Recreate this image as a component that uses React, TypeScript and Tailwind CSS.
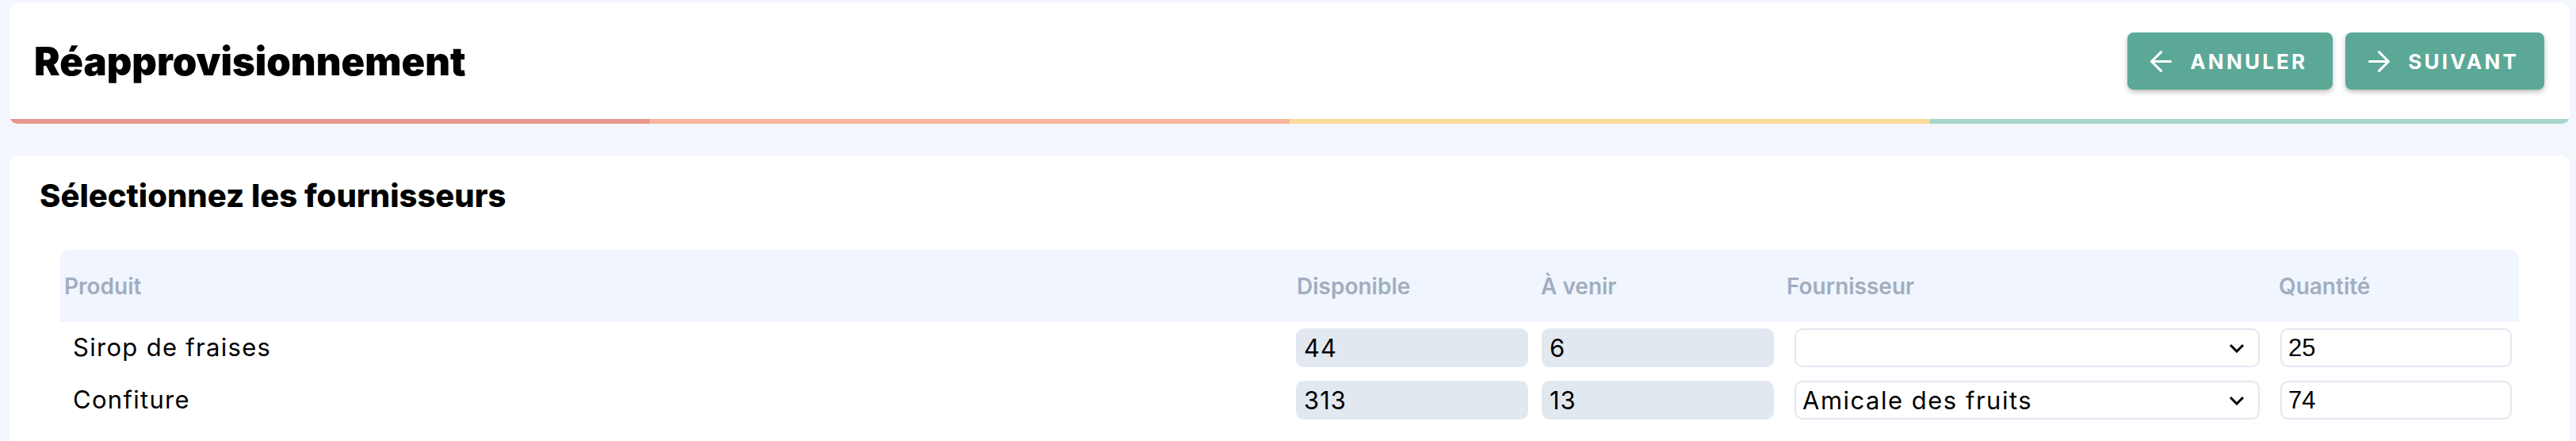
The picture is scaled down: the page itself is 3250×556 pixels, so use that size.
import { ArrowLeft, ArrowRight } from 'lucide-react';
import type { ReactNode } from 'react';

/**
 * Réapprovisionnement - étape de sélection des fournisseurs
 */

interface Ligne {
  produit: string;
  disponible: number;
  aVenir: number;
  fournisseur: string;
  quantite: number;
}

const lignes: Ligne[] = [
  { produit: 'Sirop de fraises', disponible: 44, aVenir: 6, fournisseur: '', quantite: 25 },
  { produit: 'Confiture', disponible: 313, aVenir: 13, fournisseur: 'Amicale des fruits', quantite: 74 },
];

const fournisseurs = ['Amicale des fruits', 'Vergers du Sud', 'Coopérative Bio'];

// couleurs de la barre d'étapes
const etapes = ['bg-[#e8978c]', 'bg-[#f7b69d]', 'bg-[#fbdc97]', 'bg-[#a8d5c9]'];

const colonnes = 'grid grid-cols-[1559px_309px_310px_621px_303px]';

const BoutonAction = ({ icon, label }: { icon: ReactNode; label: string }) => (
  <button className="flex items-center gap-[16px] h-[72px] pl-[22px] pr-[32px] rounded-[8px] bg-[#5ba897] text-white shadow-[0_3px_6px_rgba(0,0,0,0.25)]">
    {icon}
    <span className="text-[26px] font-bold uppercase tracking-[3.2px]">{label}</span>
  </button>
);

const App = () => {
  return (
    <div className="min-h-screen bg-[#f3f6fd] pl-[12px] pr-[8px] pt-[4px] font-['Inter',sans-serif] text-black">
      {/* Header */}
      <header className="bg-white rounded-[10px] overflow-hidden">
        <div className="flex items-center justify-between pl-[31px] pr-[32px] py-[37px]">
          <h1 className="text-[49px] leading-none font-black">Réapprovisionnement</h1>
          <div className="flex gap-[16px]">
            <BoutonAction icon={<ArrowLeft size={41} strokeWidth={1.8} />} label="Annuler" />
            <BoutonAction icon={<ArrowRight size={41} strokeWidth={1.8} />} label="Suivant" />
          </div>
        </div>
        <div className="grid grid-cols-4 h-[6px]">
          {etapes.map((c) => (
            <div key={c} className={c} />
          ))}
        </div>
      </header>

      {/* Fournisseurs */}
      <section className="mt-[40px] bg-white rounded-[10px] pt-[27px] pb-[60px]">
        <h2 className="pl-[38px] text-[40px] leading-[48px] font-extrabold">Sélectionnez les fournisseurs</h2>

        <div className="mx-[64px] mt-[44px]">
          {/* En-tête du tableau */}
          <div className={`${colonnes} h-[91px] items-center bg-[#f1f5fd] rounded-t-[10px] text-[28px] font-semibold text-[#a0aec0]`}>
            <div className="pl-[5px]">Produit</div>
            <div className="pl-[1px]">Disponible</div>
            <div>À venir</div>
            <div>Fournisseur</div>
            <div>Quantité</div>
          </div>

          {/* Lignes */}
          <div className="flex flex-col gap-[17px] pt-[8px]">
            {lignes.map((l) => (
              <div key={l.produit} className={`${colonnes} items-center text-[31px]`}>
                <div className="pl-[16px] tracking-[1.3px]">{l.produit}</div>
                <input
                  readOnly
                  defaultValue={l.disponible}
                  className="w-[293px] h-[49px] rounded-[10px] bg-[#e2e8f0] px-[10px] tracking-[1px] outline-none"
                />
                <input
                  readOnly
                  defaultValue={l.aVenir}
                  className="ml-[1px] w-[293px] h-[49px] rounded-[10px] bg-[#e2e8f0] px-[10px] tracking-[1px] outline-none"
                />
                <div className="relative ml-[10px] w-[587px]">
                  <select
                    defaultValue={l.fournisseur}
                    className="w-full h-[49px] appearance-none rounded-[10px] border-2 border-[#e2e8f0] bg-white pl-[8px] pr-[50px] tracking-[1.5px] outline-none"
                  >
                    <option value=""></option>
                    {fournisseurs.map((f) => (
                      <option key={f} value={f}>{f}</option>
                    ))}
                  </select>
                  <svg
                    className="absolute right-[19px] top-1/2 -translate-y-1/2 pointer-events-none"
                    width="20"
                    height="12"
                    viewBox="0 0 20 12"
                    fill="none"
                  >
                    <polyline points="2,2 10,10 18,2" stroke="black" strokeWidth="3" />
                  </svg>
                </div>
                <input
                  defaultValue={l.quantite}
                  className="ml-[2px] w-[292px] h-[49px] rounded-[10px] border-2 border-[#e2e8f0] bg-white px-[8px] font-['Liberation_Sans',Arial,sans-serif] text-[31px] outline-none"
                />
              </div>
            ))}
          </div>
        </div>
      </section>
    </div>
  );
};

export default App;
